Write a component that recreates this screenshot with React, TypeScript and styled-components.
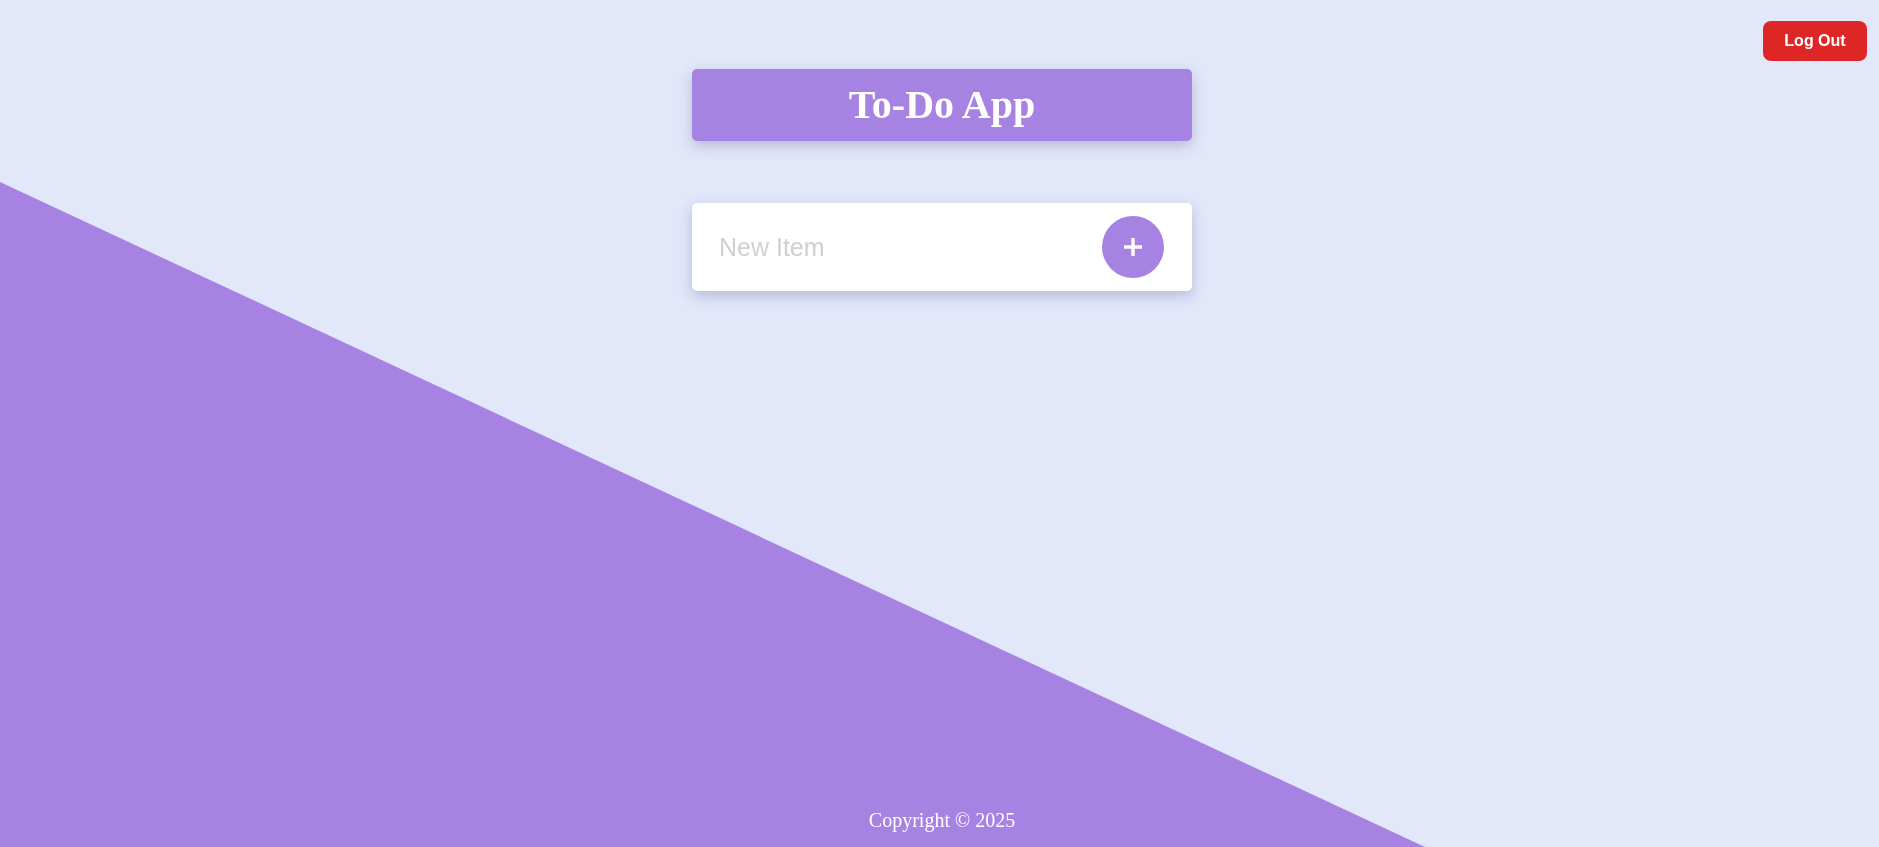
import React, { useState } from "react";
import styled, { createGlobalStyle } from "styled-components";

const Global = createGlobalStyle`
  html, body { margin: 0; padding: 0; }
  body {
    background: #e2e8fa;
    font-family: "Liberation Serif", "Times New Roman", serif;
    overflow: hidden;
  }
`;

const Backdrop = styled.div`
  position: fixed;
  inset: 0;
  background: #a683e3;
  clip-path: polygon(0 182px, 1425px 847px, 0 847px);
  z-index: 0;
`;

const Page = styled.div`
  position: relative;
  z-index: 1;
  min-height: 100vh;
  display: flex;
  flex-direction: column;
  align-items: center;
  padding-left: 5px;
  box-sizing: border-box;
`;

const TopBar = styled.div`
  align-self: stretch;
  display: flex;
  justify-content: flex-end;
  padding: 21px 12px 0 0;
  height: 61px;
  box-sizing: border-box;
  margin-bottom: 8px;
`;

const LogoutButton = styled.button`
  width: 104px;
  height: 40px;
  border: none;
  border-radius: 8px;
  background: #de2626;
  color: #fff;
  font-family: "Liberation Sans", Arial, sans-serif;
  font-weight: bold;
  font-size: 16px;
  cursor: pointer;
`;

const Header = styled.header`
  width: 500px;
  height: 72px;
  border-radius: 5px;
  background: #a683e3;
  box-shadow: 0 5px 14px rgba(90, 90, 150, 0.32);
  display: flex;
  align-items: center;
  justify-content: center;
`;

const Title = styled.h1`
  margin: 0;
  color: #fff;
  font-family: "Liberation Serif", "Times New Roman", serif;
  font-weight: bold;
  font-size: 40px;
  line-height: 1;
`;

const Form = styled.form`
  margin-top: 62px;
  width: 500px;
  height: 88px;
  border-radius: 5px;
  background: #fff;
  box-shadow: 0 5px 14px rgba(90, 90, 150, 0.32);
  display: flex;
  align-items: center;
  padding: 0 28px 0 27px;
  box-sizing: border-box;
`;

const Input = styled.input`
  flex: 1;
  border: none;
  outline: none;
  background: transparent;
  font-family: "Liberation Sans", Arial, sans-serif;
  font-size: 25px;
  color: #333;
  padding: 0;
  &::placeholder {
    color: #d0d0d0;
  }
`;

const AddButton = styled.button`
  width: 62px;
  height: 62px;
  border-radius: 50%;
  border: none;
  background: #a683e3;
  display: flex;
  align-items: center;
  justify-content: center;
  cursor: pointer;
  padding: 0;
`;

const Footer = styled.footer`
  margin-top: auto;
  padding-bottom: 15px;
  color: #fff;
  font-family: "Liberation Serif", "Times New Roman", serif;
  font-size: 20px;
`;

export default function App() {
  const [text, setText] = useState("");
  return (
    <>
      <Global />
      <Backdrop />
      <Page>
        <TopBar>
          <LogoutButton>Log Out</LogoutButton>
        </TopBar>
        <Header>
          <Title>To-Do App</Title>
        </Header>
        <Form onSubmit={(e) => e.preventDefault()}>
          <Input
            placeholder="New Item"
            value={text}
            onChange={(e) => setText(e.target.value)}
          />
          <AddButton type="submit" aria-label="Add">
            <svg width="18" height="18" viewBox="0 0 18 18">
              <path d="M9 0v18M0 9h18" stroke="#fff" strokeWidth="3.4" />
            </svg>
          </AddButton>
        </Form>
        <Footer>Copyright © 2025</Footer>
      </Page>
    </>
  );
}
